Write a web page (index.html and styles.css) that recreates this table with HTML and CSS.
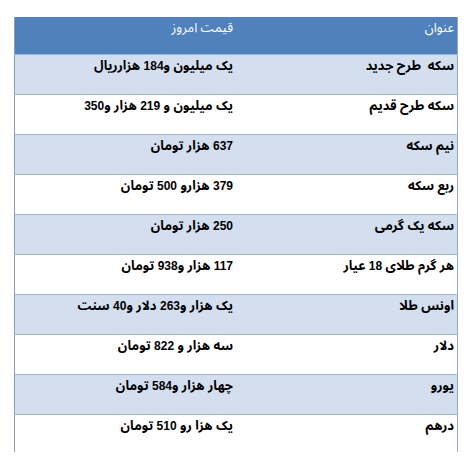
FILE: index.html
```html
<!DOCTYPE html>
<html lang="fa" dir="rtl">
<head>
<meta charset="utf-8">
<link rel="stylesheet" href="styles.css">
</head>
<body>
<table class="prices">
  <thead>
    <tr class="head">
      <th class="c-title">عنوان</th>
      <th class="c-price">قیمت امروز</th>
    </tr>
  </thead>
  <tbody>
    <tr class="alt"><td>سکه&nbsp; طرح جدید</td><td>یک میلیون و<span class="n">184</span> هزارریال</td></tr>
    <tr><td>سکه طرح قدیم</td><td>یک میلیون و <span class="n">219</span> هزار و<span class="n">350</span></td></tr>
    <tr class="alt"><td>نیم سکه</td><td><span class="n">637</span> هزار تومان</td></tr>
    <tr><td>ربع سکه</td><td><span class="n">379</span> هزارو <span class="n">500</span> تومان</td></tr>
    <tr class="alt"><td>سکه یک گرمی</td><td><span class="n">250</span> هزار تومان</td></tr>
    <tr><td>هر گرم طلای <span class="n">18</span> عیار</td><td><span class="n">117</span> هزار و<span class="n">938</span> تومان</td></tr>
    <tr class="alt"><td>اونس طلا</td><td>یک هزار و<span class="n">263</span> دلار و<span class="n">40</span> سنت</td></tr>
    <tr><td>دلار</td><td>سه هزار و <span class="n">822</span> تومان</td></tr>
    <tr class="alt"><td>یورو</td><td>چهار هزار و<span class="n">584</span> تومان</td></tr>
    <tr class="last"><td>درهم</td><td>یک هزا رو <span class="n">510</span> تومان</td></tr>
  </tbody>
</table>
</body>
</html>
```
FILE: styles.css
```css
html, body {
  margin: 0;
  padding: 0;
  background: #ffffff;
}
body {
  padding: 17px 14px 0 0;
  font-family: "Noto Sans Arabic", "Liberation Sans", sans-serif;
}
.prices {
  width: 444px;
  border-collapse: collapse;
  table-layout: fixed;
  border-left: 1px solid #8f9db0;
  border-right: 1px solid #95a9c4;
}
.prices th,
.prices td {
  width: 50%;
  text-align: right;
  vertical-align: top;
  padding: 2px 3px 0 3px;
  line-height: 18px;
}
.head th {
  height: 35px;
  background: #4f81bd;
  color: #ffffff;
  font-weight: normal;
  font-size: 13px;
}
.prices td {
  height: 37px;
  font-size: 13px;
  font-weight: bold;
  color: #000000;
  border-top: 1px solid #9cb6d8;
}
.n {
  font-family: "Liberation Sans", sans-serif;
  font-size: 12px;
}
.prices tr.alt td {
  background: #d3dfee;
}
.prices tr.last td {
  height: 35px;
}
```
